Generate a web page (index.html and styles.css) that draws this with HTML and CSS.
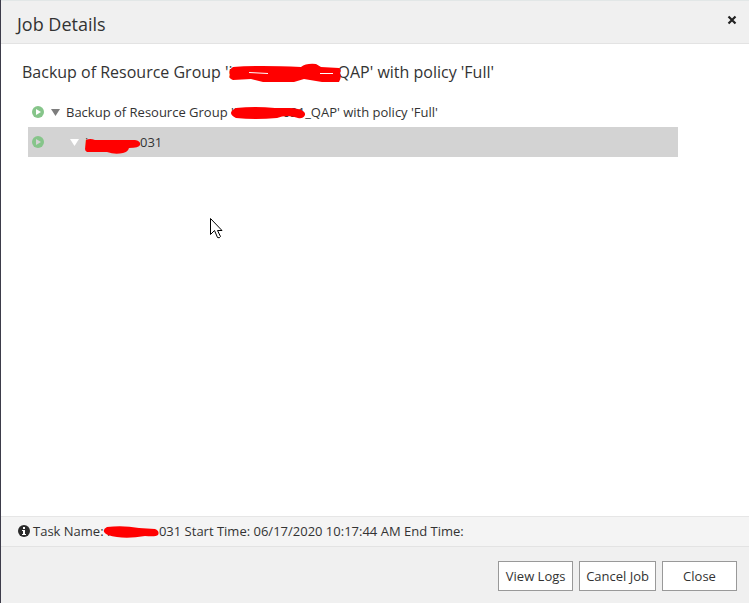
FILE: index.html
```html
<!DOCTYPE html>
<html lang="en">
<head>
  <meta charset="UTF-8" />
  <meta name="viewport" content="width=device-width, initial-scale=1.0"/>
  <title>Job Details</title>
  <link rel="stylesheet" href="styles.css">
</head>
<body>

<div class="dialog">
  <header class="dialog-header">
    <h1>Job Details</h1>
    <button type="button" class="dismiss" aria-label="Close dialog">
      <svg width="10" height="10" viewBox="0 0 10 10"><path d="M1.500 1.500l7 7M8.500 1.500l-7 7" stroke="#222" stroke-width="2.200"/></svg>
    </button>
  </header>

  <!-- Job tree -->
  <main class="content">
    <h2>Backup of Resource Group '<span class="mask mask-title">i<svg width="114" height="20" viewBox="0 0 114 20"><path d="M5 4Q30 2 73 4Q78 0 88 1L93 4L111 5Q114 7 112 10Q114 14 111 19H94L76 16L66 19H35L23 16L5 17Q0 15 2 12Q0 7 5 4Z" fill="#f00"/><path d="M21 9.500l19 1M92 10.500h13" stroke="#fff" fill="none"/></svg></span>QAP' with policy 'Full'</h2>

    <div class="tree">
      <div class="row">
        <svg class="status" width="12" height="12" viewBox="0 0 12 12"><circle cx="6" cy="6" r="6" fill="#86c58a"/><path d="M4 3v6l5-3z" fill="#fff"/></svg>
        <button type="button" class="toggle" aria-label="Collapse"><svg width="9" height="7" viewBox="0 0 9 7"><path d="M0 0h9L4.500 7z" fill="#7d7d7d"/></svg></button>
        <span>Backup of Resource Group '<span class="mask mask-group">i<svg width="76" height="12" viewBox="0 0 76 12"><path d="M6 1Q25-1 45 1L60 1Q76 2 75 8Q73 12 68 11Q57 7 47 11Q25 13 6 11Q-4 6 6 1Z" fill="#f00"/></svg></span>031_QAP' with policy 'Full'</span>
      </div>
      <div class="row child selected">
        <svg class="status" width="12" height="12" viewBox="0 0 12 12"><circle cx="6" cy="6" r="6" fill="#86c58a"/><path d="M4 3v6l5-3z" fill="#d3d3d3"/></svg>
        <button type="button" class="toggle" aria-label="Collapse"><svg width="9" height="7" viewBox="0 0 9 7"><path d="M0 0h9L4.500 7z" fill="#fff"/></svg></button>
        <span><span class="mask mask-host">i<svg width="56" height="15" viewBox="0 0 56 15"><path d="M1 1Q5-1 10 1L50 1Q56 2 55 6Q54 9 44 9Q43 13 38 14Q30 16 22 13H2Q0 12 0 10Z" fill="#f00"/></svg></span>031</span>
      </div>
    </div>
  </main>

  <div class="task-bar">
    <svg class="info" width="12" height="12" viewBox="0 0 12 12"><circle cx="6" cy="6" r="6" fill="#2b2b2b"/><path d="M5 2h2v2H5zM4 5h3v4h1v1H4V9h1V6H4z" fill="#fff"/></svg>
    <span>Task Name: <span class="mask mask-task">i<svg width="56" height="12" viewBox="0 0 56 12"><path d="M4 1Q20-1 36 2L52 3Q57 5 55 9Q53 11 42 10Q20 14 5 9Q-3 5 4 1Z" fill="#f00"/></svg></span>031 Start Time: 06/17/2020 10:17:44 AM End Time:</span>
  </div>

  <footer class="actions">
    <button type="button">View Logs</button>
    <button type="button">Cancel Job</button>
    <button type="button">Close</button>
  </footer>
</div>

<!-- Mouse pointer -->
<svg class="pointer" width="13" height="21" viewBox="0 0 13 21"><path d="M0.500 0.500v16l4-4 3 7q2 1 3-1l-3-6h4.500z" fill="#fff" stroke="#000"/></svg>

</body>
</html>
```

FILE: styles.css
```css
* { box-sizing: border-box; }

body {
  margin: 0;
  font-family: 'Open Sans', 'Noto Sans', sans-serif;
  font-size: 13px;
  line-height: 20px;
  color: #333;
  background: #fff;
}

.dialog {
  display: flex;
  flex-direction: column;
  min-height: 100vh;
  border-left: 1px solid #3d3c4a;
}

.dialog-header {
  display: flex;
  justify-content: space-between;
  align-items: center;
  height: 44px;
  padding: 4px 12px 0 16px;
  background: #f0f0f0;
  border-top: 1px solid #e2e7e7;
  border-bottom: 1px solid #e3e3e3;
}

h1, h2 {
  margin: 0;
  font-weight: normal;
}

h1 {
  font-size: 18px;
  line-height: 24px;
}

h2 {
  font-size: 16px;
  line-height: 24px;
}

.dismiss, .toggle {
  display: flex;
  padding: 0;
  border: none;
  background: none;
  cursor: pointer;
}

.dismiss { padding-bottom: 8px; }

.content {
  flex: 1;
  padding: 16px 71px 16px 21px;
}

.tree {
  margin: 13px 0 0 6px;
}

.row {
  display: flex;
  align-items: center;
  height: 30px;
  padding-left: 4px;
}

.toggle { margin: 0 6px 0 7px; }

.child .toggle { margin-left: 26px; }

.selected { background: #d3d3d3; }

/* scribbled out names */
.mask {
  display: inline-block;
  position: relative;
}

.mask svg {
  position: absolute;
  left: -4px;
  top: 5px;
}

.mask-title { width: 109px; }
.mask-title svg {
  left: -1px;
  top: 3px;
}
.mask-group { width: 49px; }
.mask-host { width: 55px; }
.mask-host svg {
  left: 0;
  top: 7px;
}
.mask-task { width: 52px; }

.task-bar {
  display: flex;
  align-items: center;
  gap: 3px;
  height: 31px;
  padding: 0 17px 2px;
  background: #f4f4f4;
  border-top: 1px solid #e6e6e6;
  border-bottom: 1px solid #e3e3e3;
}

.actions {
  display: flex;
  justify-content: flex-end;
  gap: 6px;
  padding: 14px 12px 12px;
  background: #f0f0f0;
}

.actions button {
  min-width: 75px;
  height: 30px;
  padding: 0 6px;
  border: 1px solid #999;
  background: #fff;
  color: #333;
  font: inherit;
  cursor: pointer;
}

.pointer {
  position: absolute;
  left: 210px;
  top: 218px;
}
```
